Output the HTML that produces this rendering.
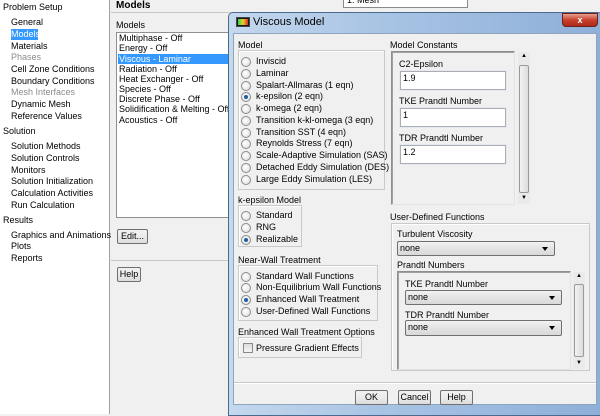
<!DOCTYPE html>
<html><head><meta charset="utf-8"><style>
*{margin:0;padding:0;box-sizing:border-box}
body{width:600px;height:414px;overflow:hidden;position:relative;background:#f0f0f0;font-family:"Liberation Sans",sans-serif;font-size:9px;color:#000}
.a{position:absolute}
.t{position:absolute;white-space:nowrap;line-height:11px;font-size:9px}
.g{color:#8c8c8c}
.box{position:absolute;border:1px solid #c9c9c9;box-shadow:inset 1px 1px 0 #fff}
.sunk{position:absolute;border:1px solid #8e8f8f;border-right-color:#e3e3e3;border-bottom-color:#e3e3e3;box-shadow:inset 1px 1px 0 #a0a0a0}
.rb{position:absolute;width:10px;height:10px;border-radius:50%;border:1px solid #8a8a8a;background:radial-gradient(circle at 40% 40%,#fff,#dcdcdc)}
.rb.on::after{content:"";position:absolute;left:2px;top:2px;width:4px;height:4px;border-radius:50%;background:#1d5fa3}
.inp{position:absolute;background:#fff;border:1px solid #abadb3;box-shadow:0 0 0 1px #e3e9ef}
.dd{position:absolute;border:1px solid #707070;border-radius:2px;background:linear-gradient(#f2f2f2,#e3e3e3 50%,#d9d9d9)}
.dd::after{content:"";position:absolute;right:6px;top:5px;border-left:3px solid transparent;border-right:3px solid transparent;border-top:4px solid #000}
.btn{position:absolute;border:1px solid #707070;border-radius:2px;background:linear-gradient(#f2f2f2,#ebebeb 50%,#dcdcdc);text-align:center;line-height:13px;font-size:9px}
.sb{position:absolute;background:#eaeaea}
</style></head><body>
<!-- left tree -->
<div class="a" style="left:0;top:0;width:110px;height:414px;background:#fff;border-right:1px solid #a0a0a0"></div>
<div class="t" style="left:3px;top:2px">Problem Setup</div>
<div class="t" style="left:11px;top:17px">General</div>
<div class="a" style="left:11px;top:29px;width:27px;height:11px;background:#3399ff"></div>
<div class="t" style="left:11px;top:29px;color:#fff">Models</div>
<div class="t" style="left:11px;top:41px">Materials</div>
<div class="t g" style="left:11px;top:52px">Phases</div>
<div class="t" style="left:11px;top:64px">Cell Zone Conditions</div>
<div class="t" style="left:11px;top:76px">Boundary Conditions</div>
<div class="t g" style="left:11px;top:87px">Mesh Interfaces</div>
<div class="t" style="left:11px;top:99px">Dynamic Mesh</div>
<div class="t" style="left:11px;top:111px">Reference Values</div>
<div class="t" style="left:3px;top:126px">Solution</div>
<div class="t" style="left:11px;top:141px">Solution Methods</div>
<div class="t" style="left:11px;top:153px">Solution Controls</div>
<div class="t" style="left:11px;top:165px">Monitors</div>
<div class="t" style="left:11px;top:176px">Solution Initialization</div>
<div class="t" style="left:11px;top:188px">Calculation Activities</div>
<div class="t" style="left:11px;top:200px">Run Calculation</div>
<div class="t" style="left:3px;top:215px">Results</div>
<div class="t" style="left:11px;top:230px">Graphics and Animations</div>
<div class="t" style="left:11px;top:241px">Plots</div>
<div class="t" style="left:11px;top:253px">Reports</div>
<!-- middle -->
<div class="a" style="left:111px;top:0;width:120px;height:13px;border-bottom:1px solid #c8c8c8"></div>
<div class="t" style="left:116px;top:0px;font-weight:bold;font-size:10px">Models</div>
<div class="t" style="left:116px;top:20px">Models</div>
<div class="a" style="left:116px;top:32px;width:120px;height:186px;background:#fff;border:1px solid #8e8f8f"></div>
<div class="a" style="left:118px;top:54px;width:115px;height:10px;background:#3399ff"></div>
<div class="t" style="left:119px;top:33px">Multiphase - Off</div>
<div class="t" style="left:119px;top:43px">Energy - Off</div>
<div class="t" style="left:119px;top:54px;color:#fff">Viscous - Laminar</div>
<div class="t" style="left:119px;top:64px">Radiation - Off</div>
<div class="t" style="left:119px;top:74px">Heat Exchanger - Off</div>
<div class="t" style="left:119px;top:84px">Species - Off</div>
<div class="t" style="left:119px;top:94px">Discrete Phase - Off</div>
<div class="t" style="left:119px;top:104px">Solidification &amp; Melting - Off</div>
<div class="t" style="left:119px;top:115px">Acoustics - Off</div>
<div class="btn" style="left:117px;top:229px;width:31px;height:15px">Edit...</div>
<div class="a" style="left:111px;top:260px;width:120px;height:1px;background:#c8c8c8"></div>
<div class="btn" style="left:117px;top:267px;width:24px;height:15px">Help</div>
<!-- top mesh dropdown -->
<div class="a" style="left:343px;top:-4px;width:125px;height:12px;border:1px solid #8a8a8a;background:#fff"></div>
<div class="t" style="left:347px;top:-5px">1. Mesh</div>
<!-- dialog frame -->
<div class="a" style="left:228px;top:12px;width:375px;height:404px;border:1px solid #4a6a90;border-radius:5px 5px 0 0;background:linear-gradient(90deg,#c4d8ee,#a9c4e4 40%,#8eafd8)"></div>
<div class="a" style="left:236px;top:17px;width:14px;height:10px;background:#1a1a1a;border:1px solid #444"></div>
<div class="a" style="left:238px;top:19px;width:10px;height:6px;background:linear-gradient(90deg,#2fd060,#e8d020,#e03020)"></div>
<div class="t" style="left:253px;top:16px;font-size:11px;line-height:13px">Viscous Model</div>
<div class="a" style="left:562px;top:13px;width:36px;height:14px;border-radius:0 0 4px 4px;border:1px solid #6b2020;background:linear-gradient(#e8a090,#c8402c 50%,#b02818);color:#fff;font-weight:bold;text-align:center;font-size:9px;line-height:12px">x</div>
<div class="a" style="left:233px;top:33px;width:364px;height:372px;background:#f0f0f0;border:1px solid #8ea5c0"></div>
<!-- Model group -->
<div class="t" style="left:238px;top:40px">Model</div>
<div class="box" style="left:238px;top:50px;width:147px;height:140px"></div>
<div class="rb" style="left:241px;top:57px"></div><div class="t" style="left:256px;top:56px">Inviscid</div>
<div class="rb" style="left:241px;top:69px"></div><div class="t" style="left:256px;top:68px">Laminar</div>
<div class="rb" style="left:241px;top:81px"></div><div class="t" style="left:256px;top:80px">Spalart-Allmaras (1 eqn)</div>
<div class="rb on" style="left:241px;top:92px"></div><div class="t" style="left:256px;top:91px">k-epsilon (2 eqn)</div>
<div class="rb" style="left:241px;top:104px"></div><div class="t" style="left:256px;top:103px">k-omega (2 eqn)</div>
<div class="rb" style="left:241px;top:116px"></div><div class="t" style="left:256px;top:115px">Transition k-kl-omega (3 eqn)</div>
<div class="rb" style="left:241px;top:128px"></div><div class="t" style="left:256px;top:127px">Transition SST (4 eqn)</div>
<div class="rb" style="left:241px;top:139px"></div><div class="t" style="left:256px;top:138px">Reynolds Stress (7 eqn)</div>
<div class="rb" style="left:241px;top:151px"></div><div class="t" style="left:256px;top:150px">Scale-Adaptive Simulation (SAS)</div>
<div class="rb" style="left:241px;top:163px"></div><div class="t" style="left:256px;top:162px">Detached Eddy Simulation (DES)</div>
<div class="rb" style="left:241px;top:175px"></div><div class="t" style="left:256px;top:174px">Large Eddy Simulation (LES)</div>
<!-- k-epsilon model -->
<div class="t" style="left:238px;top:195px">k-epsilon Model</div>
<div class="box" style="left:238px;top:205px;width:64px;height:42px"></div>
<div class="rb" style="left:241px;top:211px"></div><div class="t" style="left:256px;top:210px">Standard</div>
<div class="rb" style="left:241px;top:223px"></div><div class="t" style="left:256px;top:222px">RNG</div>
<div class="rb on" style="left:241px;top:235px"></div><div class="t" style="left:256px;top:234px">Realizable</div>
<!-- near wall -->
<div class="t" style="left:238px;top:255px">Near-Wall Treatment</div>
<div class="box" style="left:238px;top:265px;width:140px;height:56px"></div>
<div class="rb" style="left:241px;top:272px"></div><div class="t" style="left:256px;top:271px">Standard Wall Functions</div>
<div class="rb" style="left:241px;top:283px"></div><div class="t" style="left:256px;top:282px">Non-Equilibrium Wall Functions</div>
<div class="rb on" style="left:241px;top:295px"></div><div class="t" style="left:256px;top:294px">Enhanced Wall Treatment</div>
<div class="rb" style="left:241px;top:307px"></div><div class="t" style="left:256px;top:306px">User-Defined Wall Functions</div>
<div class="t" style="left:238px;top:327px">Enhanced Wall Treatment Options</div>
<div class="box" style="left:238px;top:337px;width:124px;height:21px"></div>
<div class="a" style="left:243px;top:343px;width:10px;height:10px;border:1px solid #8a8a8a;background:linear-gradient(#dcdcdc,#f6f6f6)"></div>
<div class="t" style="left:256px;top:343px">Pressure Gradient Effects</div>
<!-- model constants -->
<div class="t" style="left:390px;top:40px">Model Constants</div>
<div class="sunk" style="left:391px;top:51px;width:124px;height:154px"></div>
<div class="t" style="left:399px;top:59px">C2-Epsilon</div>
<div class="inp" style="left:400px;top:71px;width:106px;height:19px"></div>
<div class="t" style="left:403px;top:73px">1.9</div>
<div class="t" style="left:399px;top:96px">TKE Prandtl Number</div>
<div class="inp" style="left:400px;top:108px;width:106px;height:19px"></div>
<div class="t" style="left:403px;top:110px">1</div>
<div class="t" style="left:399px;top:133px">TDR Prandtl Number</div>
<div class="inp" style="left:400px;top:145px;width:106px;height:19px"></div>
<div class="t" style="left:403px;top:147px">1.2</div>
<div class="sb" style="left:518px;top:52px;width:12px;height:152px"></div>
<div class="a" style="left:519px;top:65px;width:10px;height:128px;border:1px solid #9a9a9a;border-radius:2px;background:linear-gradient(90deg,#f2f2f2,#dcdcdc)"></div>
<div class="t" style="left:521px;top:51px;font-size:6px">▲</div>
<div class="t" style="left:521px;top:193px;font-size:6px">▼</div>
<!-- UDF -->
<div class="t" style="left:390px;top:212px">User-Defined Functions</div>
<div class="box" style="left:391px;top:223px;width:199px;height:148px"></div>
<div class="t" style="left:397px;top:229px">Turbulent Viscosity</div>
<div class="dd" style="left:397px;top:241px;width:158px;height:15px"></div>
<div class="t" style="left:400px;top:243px">none</div>
<div class="t" style="left:397px;top:260px">Prandtl Numbers</div>
<div class="sunk" style="left:397px;top:271px;width:174px;height:99px"></div>
<div class="t" style="left:405px;top:279px">TKE Prandtl Number</div>
<div class="dd" style="left:405px;top:290px;width:157px;height:15px"></div>
<div class="t" style="left:408px;top:292px">none</div>
<div class="t" style="left:405px;top:310px">TDR Prandtl Number</div>
<div class="dd" style="left:405px;top:320px;width:157px;height:16px"></div>
<div class="t" style="left:408px;top:322px">none</div>
<div class="sb" style="left:573px;top:272px;width:12px;height:97px"></div>
<div class="a" style="left:574px;top:284px;width:10px;height:73px;border:1px solid #9a9a9a;border-radius:2px;background:linear-gradient(90deg,#f2f2f2,#dcdcdc)"></div>
<div class="t" style="left:576px;top:271px;font-size:6px">▲</div>
<div class="t" style="left:576px;top:358px;font-size:6px">▼</div>
<!-- footer -->
<div class="a" style="left:234px;top:382px;width:362px;height:1px;background:#c8c8c8;box-shadow:0 1px 0 #fff"></div>
<div class="btn" style="left:355px;top:390px;width:33px;height:15px">OK</div>
<div class="btn" style="left:398px;top:390px;width:33px;height:15px">Cancel</div>
<div class="btn" style="left:440px;top:390px;width:33px;height:15px">Help</div>
</body></html>
